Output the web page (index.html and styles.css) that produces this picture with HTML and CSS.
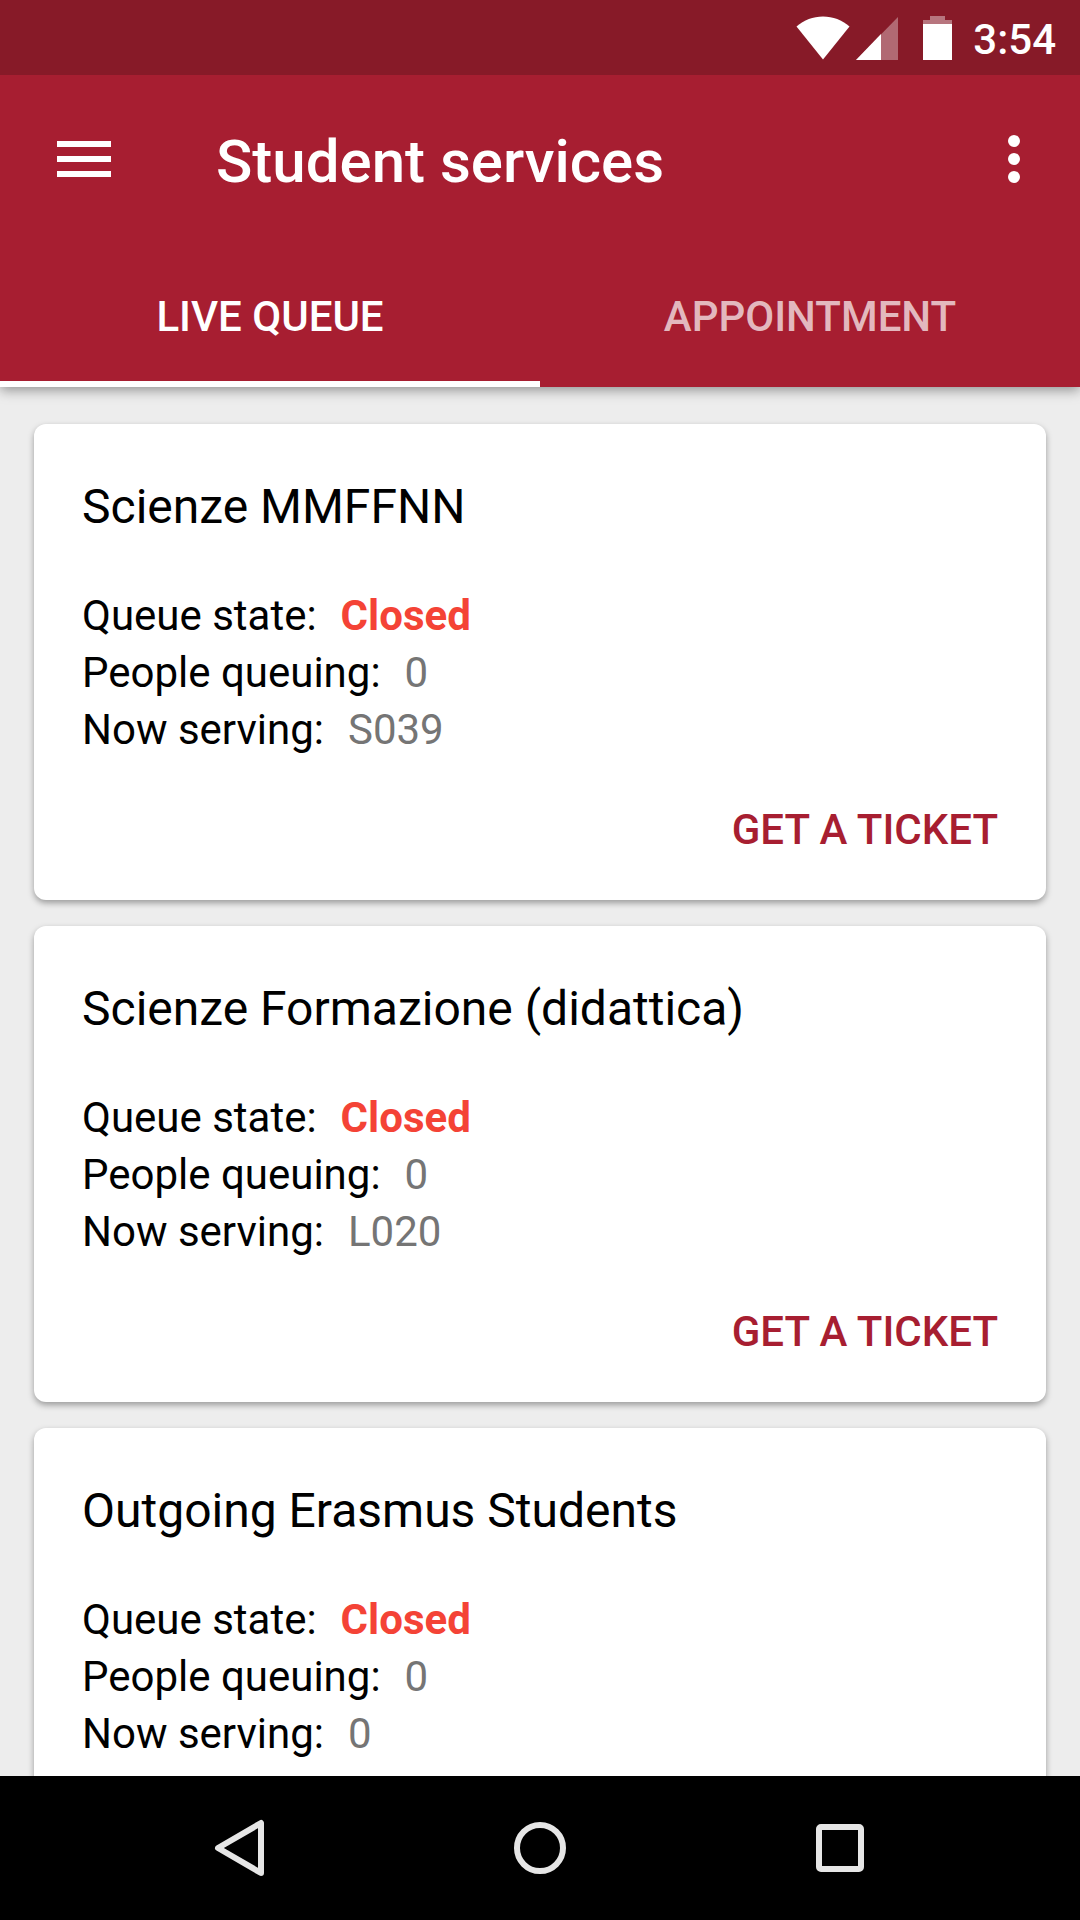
FILE: index.html
```html
<!DOCTYPE html>
<html lang="en">

<head>
  <meta charset="utf-8">
  <meta name="viewport" content="width=device-width, initial-scale=1">
  <title>Student services</title>
  <link rel="stylesheet" href="styles.css">
</head>

<body>

  <header class="header">
    <div class="status-bar">
      <svg class="wifi" width="54" height="44" viewBox="0 0 54 44" aria-hidden="true">
        <path d="M27 43.5L0.500 10.500C8 4 17 0.500 27 0.500S46 4 53.500 10.500Z" fill="#fff"/>
      </svg>
      <svg class="signal" width="42" height="44" viewBox="0 0 42 44" aria-hidden="true">
        <path d="M0 44L42 1V44Z" fill="#fff" fill-opacity="0.35"/>
        <path d="M0 44L25 18V44Z" fill="#fff"/>
      </svg>
      <svg class="battery" width="29" height="44" viewBox="0 0 29 44" aria-hidden="true">
        <path d="M7 0H22V4H29V8H0V4H7Z" fill="#fff" fill-opacity="0.4"/>
        <path d="M0 8H29V44H0Z" fill="#fff"/>
      </svg>
      <span class="clock">3:54</span>
    </div>

    <div class="toolbar">
      <button class="icon-button" aria-label="Open menu">
        <svg width="72" height="72" viewBox="0 0 24 24" fill="#fff">
          <path d="M3 18h18v-2H3v2zm0-5h18v-2H3v2zm0-7v2h18V6H3z"/>
        </svg>
      </button>
      <h1 class="title">Student services</h1>
      <button class="icon-button" aria-label="More options">
        <svg width="72" height="72" viewBox="0 0 24 24" fill="#fff">
          <circle cx="12" cy="6" r="2"/>
          <circle cx="12" cy="12" r="2"/>
          <circle cx="12" cy="18" r="2"/>
        </svg>
      </button>
    </div>

    <div class="tabs" role="tablist">
      <button class="tab active" role="tab" aria-selected="true">LIVE QUEUE</button>
      <button class="tab" role="tab" aria-selected="false">APPOINTMENT</button>
    </div>
  </header>

  <main class="queue-list">
    <section class="card">
      <h2 class="card-title">Scienze MMFFNN</h2>
      <dl class="info">
        <div class="row"><dt>Queue state:</dt><dd class="closed">Closed</dd></div>
        <div class="row"><dt>People queuing:</dt><dd>0</dd></div>
        <div class="row"><dt>Now serving:</dt><dd>S039</dd></div>
      </dl>
      <button class="ticket-button">GET A TICKET</button>
    </section>

    <section class="card">
      <h2 class="card-title">Scienze Formazione (didattica)</h2>
      <dl class="info">
        <div class="row"><dt>Queue state:</dt><dd class="closed">Closed</dd></div>
        <div class="row"><dt>People queuing:</dt><dd>0</dd></div>
        <div class="row"><dt>Now serving:</dt><dd>L020</dd></div>
      </dl>
      <button class="ticket-button">GET A TICKET</button>
    </section>

    <section class="card">
      <h2 class="card-title">Outgoing Erasmus Students</h2>
      <dl class="info">
        <div class="row"><dt>Queue state:</dt><dd class="closed">Closed</dd></div>
        <div class="row"><dt>People queuing:</dt><dd>0</dd></div>
        <div class="row"><dt>Now serving:</dt><dd>0</dd></div>
      </dl>
      <button class="ticket-button">GET A TICKET</button>
    </section>
  </main>

  <nav class="nav-bar">
    <button class="nav-button" aria-label="Back">
      <svg width="72" height="72" viewBox="0 0 72 72" fill="none" stroke="#e6e6e6" stroke-width="6" stroke-linejoin="round">
        <path d="M57 11V61L14 36Z"/>
      </svg>
    </button>
    <button class="nav-button" aria-label="Home">
      <svg width="72" height="72" viewBox="0 0 72 72" fill="none" stroke="#e6e6e6" stroke-width="6">
        <circle cx="36" cy="36" r="23"/>
      </svg>
    </button>
    <button class="nav-button" aria-label="Recent apps">
      <svg width="72" height="72" viewBox="0 0 72 72" fill="none" stroke="#e6e6e6" stroke-width="6">
        <rect x="15" y="15" width="42" height="42" rx="2"/>
      </svg>
    </button>
  </nav>

</body>

</html>
```

FILE: styles.css
```css
* {
  box-sizing: border-box;
  margin: 0;
  padding: 0;
  font-family: Roboto, sans-serif;
}

body {
  display: flex;
  flex-direction: column;
  height: 100vh;
  background-color: #ededed;
  color: #000000;
}

button {
  border: none;
  background: none;
  cursor: pointer;
}

svg {
  display: block;
}

/* Header */
.header {
  z-index: 1;
  background-color: #a71e31;
  color: #ffffff;
  box-shadow: 0 3px 12px rgba(0, 0, 0, 0.4);
}

/* Status bar */
.status-bar {
  display: flex;
  justify-content: flex-end;
  align-items: center;
  height: 75px;
  padding: 0 24px;
  background-color: #871a28;
}

.signal {
  margin-left: 6px;
}

.battery {
  margin-left: 25px;
}

.clock {
  margin-left: 21px;
  padding-top: 4px;
  font-size: 42px;
  font-weight: 500;
}

/* Toolbar */
.toolbar {
  display: flex;
  align-items: center;
  height: 168px;
  padding: 0 30px 0 48px;
}

.title {
  flex: 1;
  margin-left: 96px;
  padding-top: 4px;
  font-size: 60px;
  font-weight: 500;
}

/* Tabs */
.tabs {
  display: flex;
}

.tab {
  flex: 1;
  height: 144px;
  padding-top: 8px;
  border-bottom: 6px solid transparent;
  color: rgba(255, 255, 255, 0.7);
  font-size: 42px;
  font-weight: 500;
}

.tab.active {
  border-bottom-color: #ffffff;
  color: #ffffff;
}

/* Cards */
.queue-list {
  display: flex;
  flex: 1;
  flex-direction: column;
  gap: 26px;
  min-height: 0;
  padding: 37px 34px;
  overflow-y: auto;
  scrollbar-width: none;
}

.card {
  display: flex;
  flex: none;
  flex-direction: column;
  padding: 55px 48px 22px;
  border-radius: 12px;
  background-color: #ffffff;
  box-shadow: 0 3px 6px rgba(0, 0, 0, 0.35);
}

.card-title {
  margin-bottom: 52px;
  font-size: 48px;
  font-weight: 400;
  line-height: 56px;
}

.info {
  font-size: 42px;
  line-height: 57px;
}

.row {
  display: flex;
  gap: 24px;
}

.row dd {
  color: #757575;
}

.row .closed {
  color: #f44336;
  font-weight: 700;
}

.ticket-button {
  align-self: flex-end;
  margin-top: 23px;
  padding: 24px 0;
  color: #a71e31;
  font-size: 42px;
  font-weight: 500;
  line-height: 49px;
}

/* Bottom navigation */
.nav-bar {
  z-index: 1;
  display: flex;
  height: 144px;
  padding: 0 90px;
  background-color: #000000;
}

.nav-button {
  display: flex;
  flex: 1;
  justify-content: center;
  align-items: center;
}
```
